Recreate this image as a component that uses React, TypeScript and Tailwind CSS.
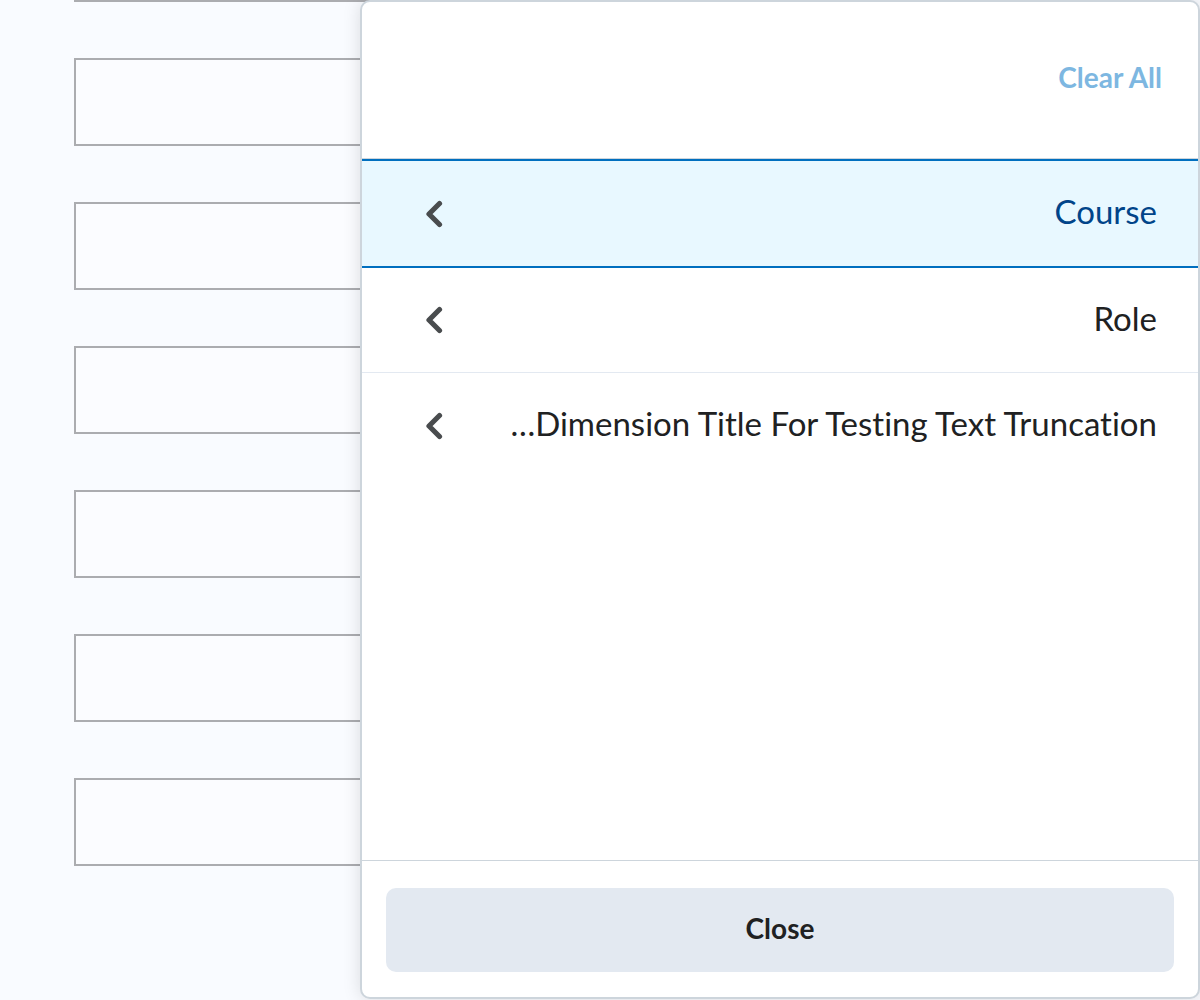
import React from "react";

const dimensions = [
  { title: "Course", selected: true },
  { title: "Role", selected: false },
  { title: "…Dimension Title For Testing Text Truncation", selected: false },
];

function ChevronLeft() {
  return (
    <svg width="18" height="28" viewBox="0 0 18 28" fill="none" className="shrink-0">
      <path d="M14.5 3.5 L4 14 L14.5 24.5" stroke="#494c4e" strokeWidth="5.2" strokeLinecap="round" strokeLinejoin="round" />
    </svg>
  );
}

export default function App() {
  const boxes = [0, 1, 2, 3, 4, 5, 6];
  return (
    <div className="relative w-[1200px] h-[1000px] overflow-hidden bg-[#f9fbff] font-['Lato','Noto_Sans',sans-serif] [font-variant-ligatures:none]">
      {/* page content behind the dropdown */}
      <div className="flex flex-col gap-[56px] ml-[74px] -mt-[86px]">
        {boxes.map((b) => (
          <div key={b} className="w-[1052px] h-[88px] border-2 border-[#abacb0] bg-[#fbfcff]" />
        ))}
      </div>

      {/* filter dropdown */}
      <div className="absolute left-[360px] top-0 w-[840px] h-[999px] flex flex-col bg-white border-2 border-[#cdd5dc] rounded-[10px] shadow-[0_0_18px_rgba(0,0,0,0.13)] overflow-hidden">
        <div className="h-[157px] flex items-center justify-end pr-[36px] pb-[6px] border-b border-[#cdd5dc]">
          <button className="text-[28px] font-bold text-[#7db7e1] leading-none">Clear All</button>
        </div>

        <div className="flex-1 flex flex-col">
          {dimensions.map((d) =>
            d.selected ? (
              <div
                key={d.title}
                className="h-[109px] flex items-center justify-between pl-[63px] pr-[41px] bg-[#e8f8ff] border-y-2 border-[#006fbf]"
              >
                <ChevronLeft />
                <span className="text-[33px] leading-none pb-[4px] text-[#004489] whitespace-nowrap">{d.title}</span>
              </div>
            ) : (
              <div
                key={d.title}
                className="h-[105px] flex items-center justify-between pl-[63px] pr-[41px] border-b border-[#e3e9f1] last:border-b-0"
              >
                <ChevronLeft />
                <span className="text-[33px] leading-none pb-[4px] text-[#202122] whitespace-nowrap">{d.title}</span>
              </div>
            )
          )}
        </div>

        <div className="border-t border-[#cdd5dc] px-[24px] pt-[27px] pb-[25px]">
          <button className="w-full h-[84px] pb-[5px] rounded-[10px] bg-[#e3e9f1] text-[28px] font-bold text-[#202122]">
            Close
          </button>
        </div>
      </div>
    </div>
  );
}
